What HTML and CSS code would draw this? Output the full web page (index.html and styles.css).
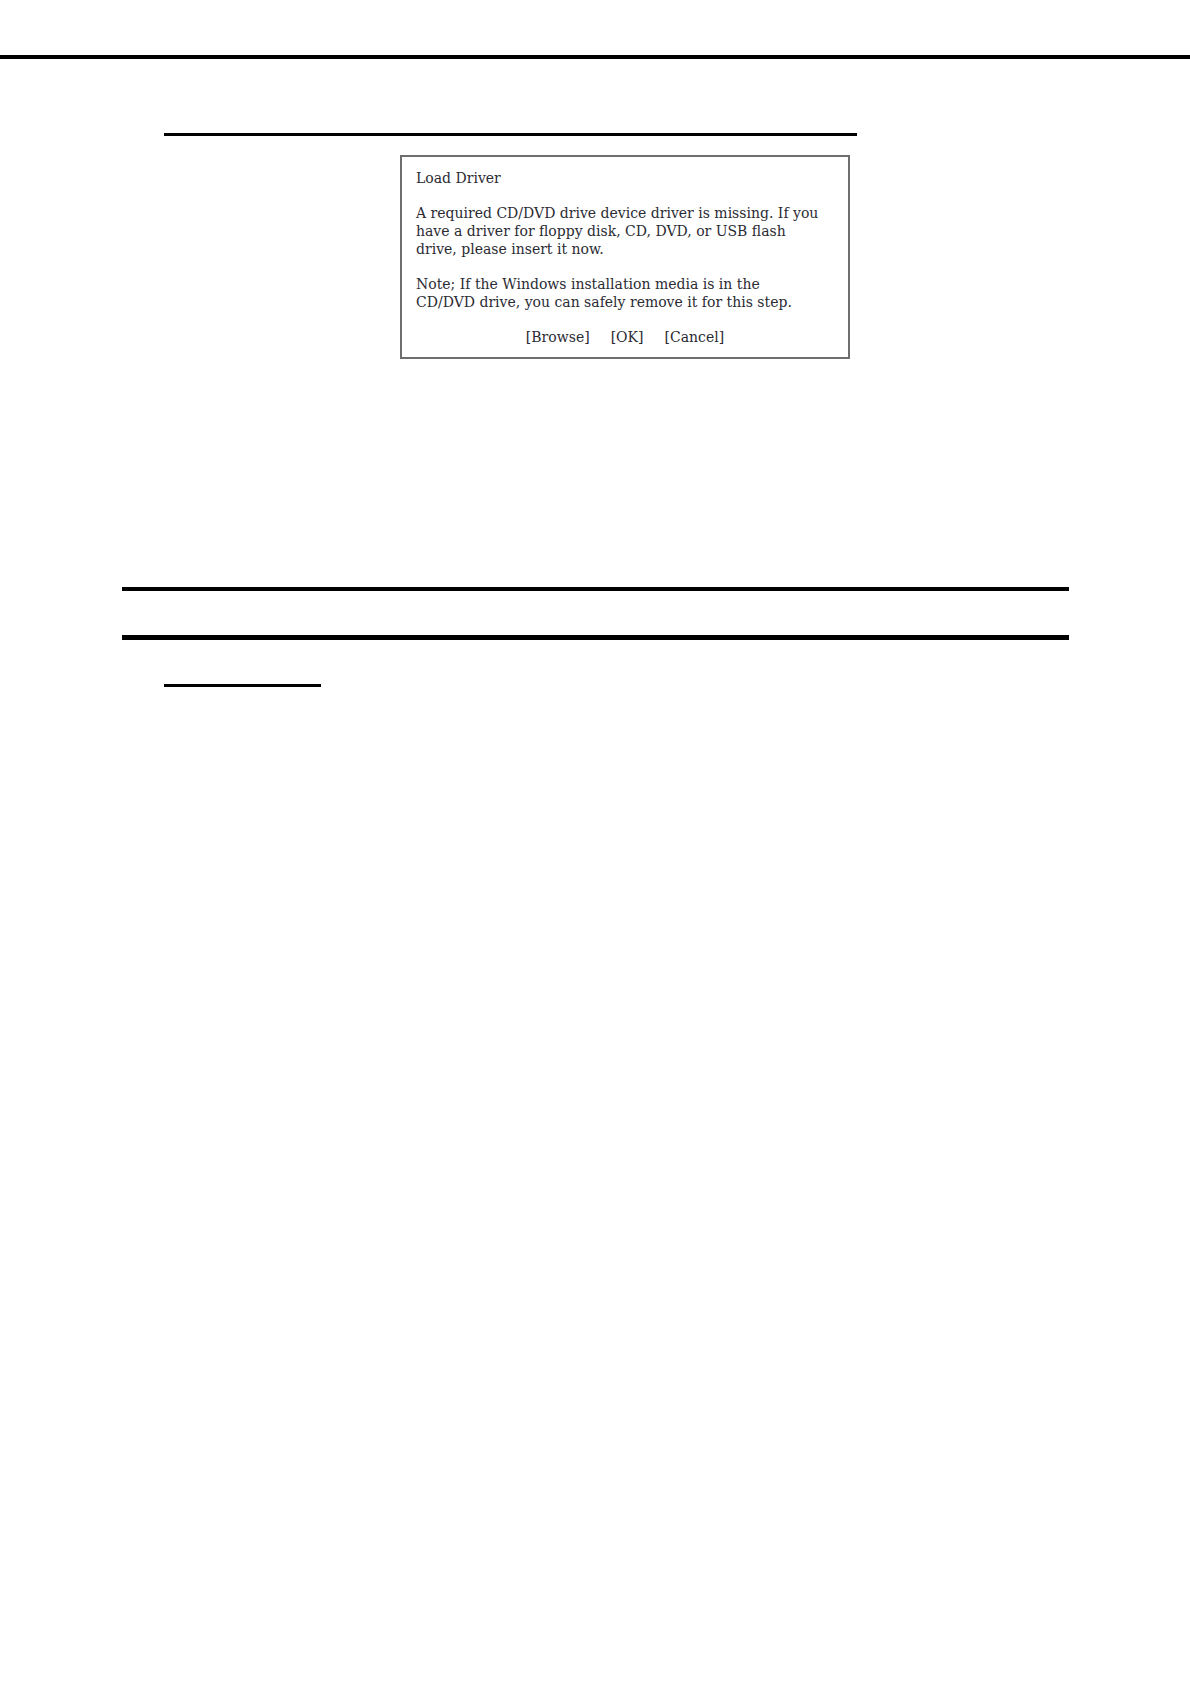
FILE: index.html
```
<!DOCTYPE html>
<html lang="en">
<head>
  <meta charset="UTF-8">
  <meta name="viewport" content="width=device-width, initial-scale=1.0">
  <title>Load Driver</title>
  <link rel="stylesheet" href="styles.css">
</head>
<body>
  <header class="page-header"></header>
  <main class="page">
    <section class="topic">
      <hr class="topic-rule topic-rule-long">
      <div class="dialog" role="dialog" aria-labelledby="dialog-title">
        <h1 class="dialog-title" id="dialog-title">Load Driver</h1>
        <p>A required CD/DVD drive device driver is missing. If you<br>have a driver for floppy disk, CD, DVD, or USB flash<br>drive, please insert it now.</p>
        <p>Note; If the Windows installation media is in the<br>CD/DVD drive, you can safely remove it for this step.</p>
        <div class="dialog-actions">
          <button type="button">[Browse]</button>
          <button type="button">[OK]</button>
          <button type="button">[Cancel]</button>
        </div>
      </div>
    </section>
    <div class="section-band"></div>
    <section class="topic">
      <hr class="topic-rule topic-rule-short">
    </section>
  </main>
</body>
</html>
```

FILE: styles.css
```
* { box-sizing: border-box; }
body { margin: 0; background: #fff; color: #2b2b33; font-family: "DejaVu Serif", serif; font-size: 14px; line-height: 18px; }
.page-header { height: 59px; border-bottom: 4px solid #000; }
.page { padding: 74px 121px 0 122px; }

/* indented topic with a heading rule */
.topic { padding-left: 42px; }
.topic-rule { height: 3px; margin: 0; border: 0; background: #000; }
.topic-rule-long { max-width: 693px; }
.topic-rule-short { max-width: 157px; }

/* message box */
.dialog { max-width: 450px; margin: 19px 0 0 236px; padding: 12px 14px 11px; border: 2px solid #6e6e6e; white-space: nowrap; }
.dialog-title { margin: 0; font-size: 14px; font-weight: 400; }
.dialog p { margin: 17px 0 0; }
.dialog-actions { display: flex; justify-content: center; gap: 21px; margin-top: 17px; }
.dialog-actions button { padding: 0; border: 0; background: none; color: inherit; font: inherit; cursor: pointer; }

/* double rule between sections */
.section-band { height: 53px; margin: 228px 0 44px; border-top: 4px solid #000; border-bottom: 5px solid #000; }
```
